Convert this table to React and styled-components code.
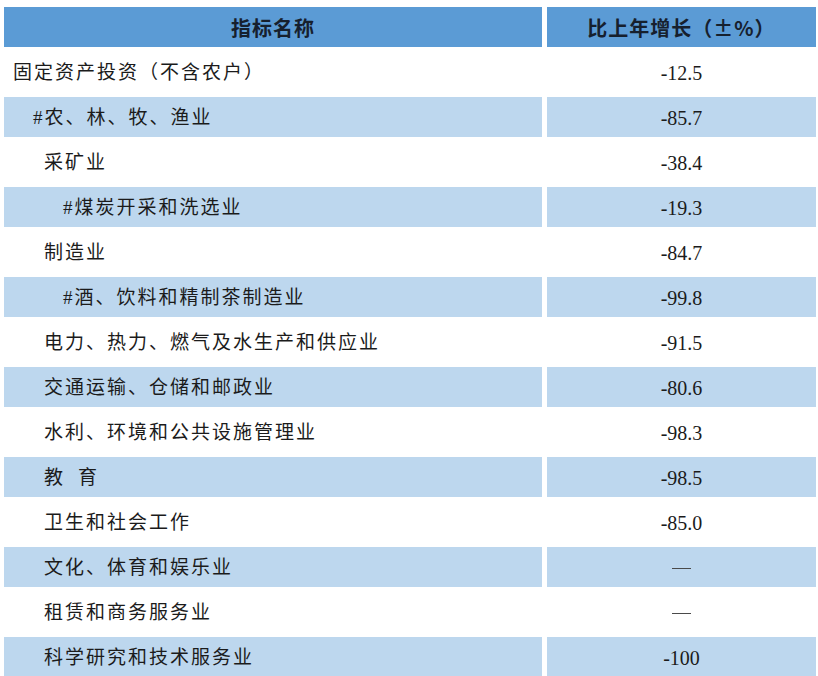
import React from 'react';
import styled, { createGlobalStyle } from 'styled-components';

const GlobalStyle = createGlobalStyle`
  html, body {
    margin: 0;
    padding: 0;
    background: #ffffff;
  }
  body {
    font-family: "Liberation Serif", "Noto Sans CJK SC", serif;
    color: #1b1b1b;
  }
`;

const Table = styled.div`
  display: flex;
  flex-direction: column;
  gap: 5px;
  padding: 7px 0 0 4px;
  width: 818px;
  height: 676px;
  box-sizing: border-box;
  overflow: hidden;
`;

const Row = styled.div`
  display: grid;
  grid-template-columns: 538px 269px;
  column-gap: 5px;
  height: 40px;
  flex-shrink: 0;
`;

const Cell = styled.div`
  display: flex;
  align-items: center;
  background: ${(p) => (p.$header ? '#5b9bd5' : p.$shade ? '#bdd7ee' : '#ffffff')};
  justify-content: ${(p) => (p.$center ? 'center' : 'flex-start')};
  padding-left: ${(p) => p.$indent || 0}px;
  white-space: pre;
`;

const HeadText = styled.span`
  font-family: "Noto Sans CJK SC", "Liberation Sans", sans-serif;
  font-weight: 700;
  font-size: 20px;
  letter-spacing: 1px;
  color: #16202e;
`;

const Name = styled.span`
  font-family: "Liberation Serif", "Noto Sans CJK SC", serif;
  font-size: 19px;
  letter-spacing: 2px;
  line-height: 1;
  padding-top: 1px;
`;

const Value = styled.span`
  font-family: "Liberation Serif", "Noto Sans CJK SC", serif;
  font-size: 20px;
  line-height: 1;
  padding-top: 1px;
`;

const Dash = styled.span`
  display: inline-block;
  width: 19px;
  height: 1px;
  background: #4a4a4a;
  margin-top: 2px;
`;

const Gap = styled.span`
  display: inline-block;
  width: ${(p) => p.$w}px;
`;

const indents = [9, 29, 40, 59];

const rows = [
  { name: '固定资产投资（不含农户）', level: 0, value: '-12.5' },
  { name: '#农、林、牧、渔业', level: 1, value: '-85.7' },
  { name: '采矿业', level: 2, value: '-38.4' },
  { name: '#煤炭开采和洗选业', level: 3, value: '-19.3' },
  { name: '制造业', level: 2, value: '-84.7' },
  { name: '#酒、饮料和精制茶制造业', level: 3, value: '-99.8' },
  { name: '电力、热力、燃气及水生产和供应业', level: 2, value: '-91.5' },
  { name: '交通运输、仓储和邮政业', level: 2, value: '-80.6' },
  { name: '水利、环境和公共设施管理业', level: 2, value: '-98.3' },
  { name: 'edu', level: 2, value: '-98.5' },
  { name: '卫生和社会工作', level: 2, value: '-85.0' },
  { name: '文化、体育和娱乐业', level: 2, value: null },
  { name: '租赁和商务服务业', level: 2, value: null },
  { name: '科学研究和技术服务业', level: 2, value: '-100' },
];

export default function App() {
  return (
    <>
      <GlobalStyle />
      <Table>
        <Row>
          <Cell $header $center>
            <HeadText>指标名称</HeadText>
          </Cell>
          <Cell $header $center>
            <HeadText>比上年增长（±%）</HeadText>
          </Cell>
        </Row>
        {rows.map((r, i) => (
          <Row key={i}>
            <Cell $shade={i % 2 === 1} $indent={indents[r.level]}>
              {r.name === 'edu' ? (
                <Name>
                  教<Gap $w={13} />育
                </Name>
              ) : (
                <Name>{r.name}</Name>
              )}
            </Cell>
            <Cell $shade={i % 2 === 1} $center>
              {r.value ? <Value>{r.value}</Value> : <Dash />}
            </Cell>
          </Row>
        ))}
      </Table>
    </>
  );
}
